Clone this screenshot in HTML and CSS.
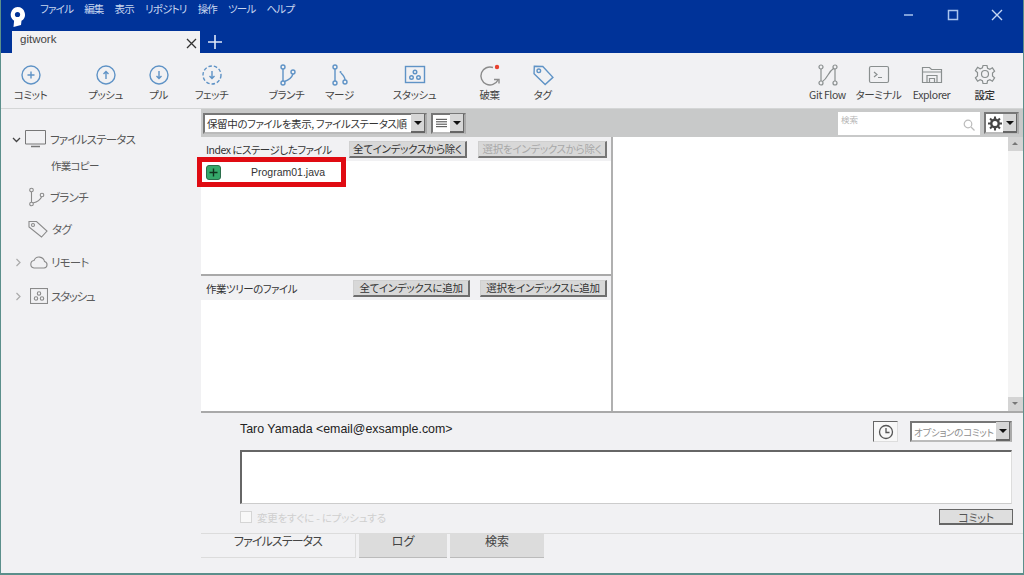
FILE: index.html
```html
<!DOCTYPE html>
<html lang="ja">
<head>
<meta charset="utf-8">
<title>gitwork</title>
<link rel="stylesheet" href="styles.css">
</head>
<body>
<div class="app">
  <header class="titlebar">
    <div class="menurow">
      <svg class="logo" width="17" height="22" viewBox="0 0 16 22"><path d="M8 1a7.5 7.5 0 0 1 4 13.8L11.500 19 4 21l.6-6.300A7.500 7.500 0 0 1 8 1z" fill="#fff"/><circle cx="8" cy="8.500" r="2.600" fill="#003399"/></svg>
      <nav class="menu"><span>ファイル</span><span>編集</span><span>表示</span><span>リポジトリ</span><span>操作</span><span>ツール</span><span>ヘルプ</span></nav>
      <div class="winctl">
        <svg width="12" height="12" viewBox="0 0 12 12"><path d="M1 6h9" stroke="#a9c4ee" stroke-width="1.500"/></svg>
        <svg width="12" height="12" viewBox="0 0 12 12"><rect x="1.500" y="1.500" width="9" height="9" fill="none" stroke="#a9c4ee" stroke-width="1.500"/></svg>
        <svg width="12" height="12" viewBox="0 0 12 12"><path d="M1 1l10 10M11 1L1 11" stroke="#c6d8f4" stroke-width="1.400"/></svg>
      </div>
    </div>
    <div class="tabrow">
      <div class="doctab"><span>gitwork</span><svg width="11" height="11" viewBox="0 0 11 11"><path d="M1 1l9 9M10 1l-9 9" stroke="#333" stroke-width="1.300"/></svg></div>
      <svg class="plus" width="14" height="14" viewBox="0 0 14 14"><path d="M7 0v14M0 7h14" stroke="#dfe8f8" stroke-width="1.600"/></svg>
    </div>
  </header>

  <section class="toolbar">
    <div class="tool"><svg width="24" height="24" viewBox="0 0 24 24"><circle cx="12" cy="12" r="9" class="ib"/><path d="M12 8.500v7M8.500 12h7" class="ib"/></svg><span>コミット</span></div>
    <div class="tool g"><svg width="24" height="24" viewBox="0 0 24 24"><circle cx="12" cy="12" r="9" class="ib"/><path d="M12 16V8.500M9.500 11L12 8.500l2.500 2.500" class="ib"/></svg><span>プッシュ</span></div>
    <div class="tool"><svg width="24" height="24" viewBox="0 0 24 24"><circle cx="12" cy="12" r="9" class="ib"/><path d="M12 8v7.500M9.500 13l2.500 2.500 2.500-2.500" class="ib"/></svg><span>プル</span></div>
    <div class="tool"><svg width="24" height="24" viewBox="0 0 24 24"><circle cx="12" cy="12" r="9" class="ib" stroke-dasharray="3.500 2"/><path d="M12 8v7.500M9.500 13l2.500 2.500 2.500-2.500" class="ib"/></svg><span>フェッチ</span></div>
    <div class="tool g"><svg width="24" height="24" viewBox="0 0 24 24"><circle cx="8" cy="4" r="2" class="ib"/><circle cx="8" cy="20" r="2" class="ib"/><circle cx="18" cy="9" r="2" class="ib"/><path d="M8 6v12M9.500 18.500C14 17 17 14 18 11" class="ib"/></svg><span>ブランチ</span></div>
    <div class="tool"><svg width="24" height="24" viewBox="0 0 24 24"><circle cx="7" cy="4" r="2" class="ib"/><circle cx="7" cy="20" r="2" class="ib"/><circle cx="17" cy="19" r="2" class="ib"/><path d="M7 6v12M17 17c0-3-2-5-4-7" class="ib"/><circle cx="12.500" cy="9" r="1" fill="#5f93c6"/></svg><span>マージ</span></div>
    <div class="tool g"><svg width="24" height="24" viewBox="0 0 24 24"><rect x="2.500" y="3.500" width="19" height="16" class="ib"/><circle cx="12" cy="9" r="1.800" class="ib"/><circle cx="8.500" cy="14.500" r="1.800" class="ib"/><circle cx="15.500" cy="14.500" r="1.800" class="ib"/></svg><span>スタッシュ</span></div>
    <div class="tool g"><svg width="24" height="24" viewBox="0 0 24 24"><path d="M15 4.500A9 9 0 1 0 20 17" fill="none" stroke="#8b8b8b" stroke-width="1.400"/><path d="M16 16.500h5v4" fill="none" stroke="#8b8b8b" stroke-width="1.400"/><circle cx="19" cy="4" r="2.200" fill="#e8412f"/></svg><span>破棄</span></div>
    <div class="tool"><svg width="24" height="24" viewBox="0 0 24 24"><path d="M3 3.500h8.500L22 14l-7.500 7.500L3 11z" class="ib" transform="rotate(2 12 12)"/><circle cx="7.800" cy="7.800" r="1.800" class="ib"/></svg><span>タグ</span></div>
    <div class="spacer"></div>
    <div class="tool flow"><svg width="24" height="24" viewBox="0 0 24 24"><circle cx="5" cy="4" r="2" class="ig"/><circle cx="5" cy="20" r="2" class="ig"/><circle cx="19" cy="4" r="2" class="ig"/><circle cx="19" cy="20" r="2" class="ig"/><path d="M5 6v12M19 6v12M6.500 18.500C12 15 12 9 17.500 5.500" class="ig"/></svg><span>Git Flow</span></div>
    <div class="tool"><svg width="24" height="24" viewBox="0 0 24 24"><rect x="2.500" y="3.500" width="19" height="16" rx="1.500" class="ig"/><path d="M7 9l3 2.500L7 14M11 14.500h4" class="ig"/></svg><span>ターミナル</span></div>
    <div class="tool"><svg width="24" height="24" viewBox="0 0 24 24"><path d="M2.500 19.500v-15h7l2 2h10v13z" class="ig"/><path d="M2.500 9h19M7 19.500v-7h10v7M9.500 19.500v-4h5v4" class="ig"/></svg><span>Explorer</span></div>
    <div class="tool"><svg width="24" height="24" viewBox="0 0 24 24"><path d="M10 2.500h4l.6 2.800 2.300 1 2.500-1.500 2.200 3.400-2.100 1.900v2.800l2.100 1.900-2.200 3.400-2.500-1.500-2.300 1-.6 2.800h-4l-.6-2.800-2.300-1-2.500 1.500-2.200-3.400 2.100-1.900V9.600L2.400 7.700l2.200-3.400 2.500 1.500 2.300-1z" class="ig"/><circle cx="12" cy="11" r="3.500" class="ig"/></svg><span class="strong">設定</span></div>
  </section>

  <div class="body">
    <aside class="sidebar">
      <div class="side first">
        <svg class="chev" width="9" height="9" viewBox="0 0 9 9"><path d="M1 3l3.500 3.500L8 3" fill="none" stroke="#444" stroke-width="1.300"/></svg>
        <svg width="21" height="18" viewBox="0 0 21 18"><path d="M.5.500h20v13.500H.5z" fill="none" stroke="#777"/><path d="M6 16.500h9" stroke="#777" stroke-width="1.500"/></svg>
        <span class="sidetxt big">ファイルステータス</span>
      </div>
      <div class="side sub"><span>作業コピー</span></div>
      <div class="side branch">
        <svg width="17" height="20" viewBox="0 0 17 20"><circle cx="3.500" cy="3" r="1.800" class="is"/><circle cx="3.500" cy="17" r="1.800" class="is"/><circle cx="14" cy="8" r="1.800" class="is"/><path d="M3.500 5v10M5 16c4-1 7.500-3.500 8.500-6" class="is"/></svg>
        <span class="sidetxt">ブランチ</span>
      </div>
      <div class="side tag">
        <svg width="20" height="18" viewBox="0 0 20 18"><path d="M1 1.500h7.500L19 11l-5.500 6L1 7z" class="is"/><circle cx="5" cy="5" r="1.500" class="is"/></svg>
        <span class="sidetxt">タグ</span>
      </div>
      <div class="side remote">
        <svg class="chev" width="7" height="9" viewBox="0 0 7 9"><path d="M1.500 1l3.500 3.500L1.500 8" fill="none" stroke="#aaa" stroke-width="1.200"/></svg>
        <svg width="18" height="13" viewBox="0 0 18 13"><path d="M4 12h10a3.300 3.300 0 0 0 .5-6.500A5.500 5.500 0 0 0 4 4.500 3.800 3.800 0 0 0 4 12z" class="is"/></svg>
        <span class="sidetxt">リモート</span>
      </div>
      <div class="side stash">
        <svg class="chev" width="7" height="9" viewBox="0 0 7 9"><path d="M1.500 1l3.500 3.500L1.500 8" fill="none" stroke="#aaa" stroke-width="1.200"/></svg>
        <svg width="18" height="16" viewBox="0 0 18 16"><rect x=".5" y=".5" width="17" height="15" class="is"/><circle cx="9" cy="5.500" r="1.700" class="is"/><circle cx="6" cy="10.500" r="1.700" class="is"/><circle cx="12" cy="10.500" r="1.700" class="is"/></svg>
        <span class="sidetxt">スタッシュ</span>
      </div>
    </aside>

    <main class="main">
      <div class="filterbar">
        <div class="combo filter"><span class="combotxt">保留中のファイルを表示, ファイルステータス順</span><i class="drop"></i></div>
        <div class="combo view">
          <svg width="12" height="10" viewBox="0 0 12 10"><path d="M0 1h12M0 3.700h12M0 6.300h12M0 9h12" stroke="#333"/></svg>
          <i class="drop"></i>
        </div>
        <div class="search"><span>検索</span>
          <svg width="12" height="12" viewBox="0 0 12 12"><circle cx="5" cy="5" r="3.800" fill="none" stroke="#bbb" stroke-width="1.200"/><path d="M8 8l3.500 3.500" stroke="#bbb" stroke-width="1.300"/></svg>
        </div>
        <div class="combo gear">
          <svg width="15" height="15" viewBox="0 0 15 15"><circle cx="7.500" cy="7.500" r="4" fill="none" stroke="#444" stroke-width="2.600"/><path d="M7.500 0v3M7.500 12v3M0 7.500h3M12 7.500h3M2.200 2.200l2 2M10.800 10.800l2 2M12.800 2.200l-2 2M4.200 10.800l-2 2" stroke="#444" stroke-width="2.200"/></svg>
          <i class="drop"></i>
        </div>
      </div>

      <div class="panes">
        <div class="leftpanes">
          <section class="pane staged">
            <div class="panehead">
              <span class="panelabel">Index にステージしたファイル</span>
              <button class="btn rm-all">全てインデックスから除く</button>
              <button class="btn rm-sel off">選択をインデックスから除く</button>
            </div>
            <div class="filerow">
              <svg width="15" height="15" viewBox="0 0 15 15"><rect x=".5" y=".5" width="14" height="14" rx="2.500" fill="#35a86a" stroke="#2b6e4b"/><path d="M7.500 3.500v8M3.500 7.500h8" stroke="#10331f" stroke-width="1.400"/></svg>
              <span>Program01.java</span>
            </div>
          </section>
          <section class="pane working">
            <div class="panehead second">
              <span class="panelabel">作業ツリーのファイル</span>
              <button class="btn add-all">全てインデックスに追加</button>
              <button class="btn add-sel">選択をインデックスに追加</button>
            </div>
          </section>
        </div>
        <div class="diff">
          <div class="scroll">
            <i class="arrow up"></i>
            <i class="arrow down"></i>
          </div>
        </div>
      </div>

      <section class="commit">
        <div class="authorrow">
          <span class="author">Taro Yamada &lt;email@exsample.com&gt;</span>
          <div class="clock"><svg width="16" height="16" viewBox="0 0 16 16"><circle cx="8" cy="8" r="6.500" fill="none" stroke="#555" stroke-width="1.300"/><path d="M8 4v4.500h3.500" fill="none" stroke="#555" stroke-width="1.300"/></svg></div>
          <div class="combo options"><span class="combotxt">オプションのコミット</span><i class="drop"></i></div>
        </div>
        <div class="message"></div>
        <div class="commitfoot">
          <label class="push"><i class="check"></i><span>変更をすぐに - にプッシュする</span></label>
          <button class="btn commitbtn">コミット</button>
        </div>
      </section>

      <div class="bottomtabs">
        <div class="btab active">ファイルステータス</div>
        <div class="btab log">ログ</div>
        <div class="btab find">検索</div>
      </div>
    </main>
  </div>
</div>
<div class="callout"></div>
</body>
</html>
```
FILE: styles.css
```css
* { box-sizing: border-box; }
html, body { margin: 0; padding: 0; }
body {
  width: 1024px;
  height: 575px;
  overflow: hidden;
  position: relative;
  font-family: "Noto Sans CJK JP", "Noto Sans", sans-serif;
  font-feature-settings: "palt";
  color: #333;
  background: #f1f1f3;
}
.app {
  width: 1024px;
  height: 575px;
  display: flex;
  flex-direction: column;
  border-left: 1px solid #5b8f8b;
  border-right: 1px solid #5b8f8b;
  border-bottom: 2px solid #5b8f8b;
}
.titlebar {
  height: 53px;
  flex: none;
  background: #003399;
  display: flex;
  flex-direction: column;
}
.menurow { height: 31px; display: flex; align-items: flex-start; }
.logo { margin: 6px 0 0 8px; flex: none; }
.menu {
  display: flex;
  gap: 11px;
  margin: 1px 0 0 14px;
  font-size: 10.500px;
  line-height: 16px;
  letter-spacing: -.8px;
  color: #c9d7ef;
}
.winctl {
  margin-left: auto;
  display: flex;
  gap: 32px;
  padding: 9px 20px 0 0;
}
.tabrow { height: 22px; display: flex; align-items: flex-start; }
.doctab {
  width: 188px;
  height: 22px;
  margin-left: 11px;
  background: #f1f1f3;
  display: flex;
  justify-content: space-between;
  align-items: flex-start;
  padding: 1px 3px 0 8px;
  font-family: "Liberation Sans", sans-serif;
  font-size: 11.500px;
  line-height: 14px;
  color: #444;
}
.doctab svg { margin-top: 6px; }
.plus { margin: 4px 0 0 8px; }

.toolbar {
  height: 56px;
  flex: none;
  display: flex;
  padding: 10px 12px 0 3px;
  background: #f1f1f3;
  border-bottom: 1px solid #d4d6d6;
}
.tool {
  width: 53px;
  display: flex;
  flex-direction: column;
  align-items: center;
  font-size: 10.500px;
  line-height: 14px;
  letter-spacing: -.4px;
  color: #444;
  white-space: nowrap;
  gap: 1px;
}
.tool svg { flex: none; }
.tool.g { margin-left: 22px; }
.tool.flow { margin-right: -2px; }
.spacer { flex: 1; }
.strong { color: #333; font-weight: 500; }
.ib { fill: none; stroke: #5f93c6; stroke-width: 1.400; }
.ig { fill: none; stroke: #8a8f8f; stroke-width: 1.200; }
.is { fill: none; stroke: #8a8a8a; stroke-width: 1.100; }

.body { flex: 1; display: flex; min-height: 0; }
.sidebar { width: 200px; flex: none; padding-top: 19px; background: #f1f1f3; }
.side { display: flex; align-items: center; font-size: 11.500px; letter-spacing: -.7px; color: #5c5c5c; }
.side.first { height: 22px; padding-left: 11px; gap: 4px; }
.sidetxt.big { font-size: 11.500px; letter-spacing: -.8px; color: #555; }
.side.sub { height: 30px; padding-left: 50px; font-size: 10.500px; letter-spacing: -.7px; color: #555; }
.side.branch { height: 32px; padding-left: 27px; gap: 5px; margin-top: 1px; }
.side.tag { height: 32px; padding-left: 27px; gap: 4px; }
.side.remote { height: 34px; padding-left: 14px; gap: 3px; }
.side.stash { height: 34px; padding-left: 14px; gap: 3px; }
.remote .chev, .stash .chev { margin-right: 5px; }
.stash .sidetxt { letter-spacing: -1.300px; }

.main { flex: 1; min-width: 0; display: flex; flex-direction: column; }
.filterbar {
  height: 28px;
  flex: none;
  background: #c8c9c9;
  display: flex;
  align-items: center;
  padding: 0 4px 0 2px;
  gap: 4px;
}
.combo {
  height: 21px;
  display: flex;
  align-items: center;
  background: #fff;
  border: 2px solid #777;
  border-right-color: #aaa;
  border-bottom-color: #bbb;
  font-size: 10.500px;
  color: #333;
}
.combotxt { flex: 1; padding-left: 2px; white-space: nowrap; min-width: 0; }
.drop {
  width: 14px;
  height: 19px;
  flex: none;
  background: #d6d6d6;
  border-right: 1px solid #666;
  border-bottom: 2px solid #666;
  position: relative;
}
.drop::after {
  content: "";
  position: absolute;
  left: 3px;
  top: 7px;
  border: 4px solid transparent;
  border-top: 4px solid #111;
  border-bottom: 0;
}
.filter { width: 224px; letter-spacing: -.4px; }
.view { width: 35px; gap: 3px; padding-left: 3px; }
.search {
  width: 142px;
  height: 23px;
  margin-left: auto;
  background: #fff;
  display: flex;
  justify-content: space-between;
  padding: 1px 5px 0 3px;
  font-size: 8.500px;
  color: #b5b5b5;
  align-items: flex-start;
}
.search svg { margin-top: 6px; }
.gear { width: 35px; height: 22px; padding-left: 2px; gap: 1px; }

.panes { height: 276px; flex: none; display: flex; background: #fff; border-bottom: 2px solid #a9a9a9; }
.leftpanes { width: 412px; flex: none; display: flex; flex-direction: column; border-right: 2px solid #b0b0b0; }
.pane.staged { height: 139px; flex: none; border-bottom: 2px solid #a9a9a9; }
.pane.working { flex: 1; }
.panehead {
  height: 24px;
  display: flex;
  align-items: center;
  background: #f1f1f3;
  padding: 0 4px 0 5px;
  font-size: 10.500px;
  letter-spacing: -.5px;
}
.panelabel { margin-right: auto; color: #333; white-space: nowrap; }
.btn {
  height: 17px;
  padding: 0;
  font: inherit;
  font-family: "Noto Sans CJK JP", sans-serif;
  font-feature-settings: "palt";
  letter-spacing: -.3px;
  line-height: 14px;
  background: #d8d8d8;
  color: #333;
  border: 1px solid #d0d0d0;
  border-right: 2px solid #6e6e6e;
  border-bottom: 2px solid #6e6e6e;
  white-space: nowrap;
}
.btn.off { color: #a8a8a8; border-color: #cfcfcf #777 #777 #cfcfcf; }
.rm-all { width: 118px; margin-right: 11px; }
.rm-sel { width: 129px; }
.add-all { width: 117px; margin-right: 10px; }
.add-sel { width: 127px; }
.filerow {
  height: 22px;
  display: flex;
  align-items: center;
  padding-left: 5px;
  font-family: "Liberation Sans", sans-serif;
  font-size: 10.500px;
  color: #333;
  gap: 30px;
}
.diff { flex: 1; position: relative; display: flex; justify-content: flex-end; }
.scroll { width: 15px; background: #f4f4f4; display: flex; flex-direction: column; justify-content: space-between; }
.arrow { height: 14px; background: #d4d4d4; display: block; position: relative; }
.arrow::after {
  content: "";
  position: absolute;
  left: 4px;
  top: 5px;
  border: 3px solid transparent;
}
.arrow.up::after { border-bottom-color: #777; border-top: 0; }
.arrow.down::after { border-top-color: #777; border-bottom: 0; }

.commit { height: 121px; flex: none; padding: 8px 11px 0 39px; display: flex; flex-direction: column; background: #f1f1f3; border-bottom: 1px solid #dcdcdc; }
.authorrow { height: 29px; display: flex; align-items: flex-start; }
.author {
  font-family: "Liberation Sans", sans-serif;
  font-size: 12.400px;
  line-height: 16px;
  color: #222;
  margin-right: auto;
}
.clock {
  width: 25px;
  height: 21px;
  display: flex;
  align-items: center;
  justify-content: center;
  border: 1px solid #666;
  border-right-color: #ddd;
  border-bottom-color: #ddd;
  background: #f8f8f8;
  margin-right: 12px;
}
.options { width: 102px; color: #8e8e8e; font-size: 9.500px; letter-spacing: -.3px; }
.message {
  height: 54px;
  flex: none;
  background: #fff;
  border: 2px solid #666;
  border-right: 1px solid #ddd;
  border-bottom: 1px solid #ccc;
}
.commitfoot { display: flex; justify-content: space-between; align-items: center; margin-top: 5px; }
.push { display: flex; align-items: center; gap: 5px; font-size: 10.500px; letter-spacing: -.2px; color: #cfcfcf; }
.check { width: 12px; height: 12px; background: #f8f8f8; border: 1px solid #d5d5d5; }
.commitbtn { width: 74px; height: 16px; font-size: 11px; color: #555; background: #dedede; border: 1px solid #666; border-right-width: 1px; border-bottom-width: 2px; line-height: 12px; margin-right: -1px; }

.bottomtabs { display: flex; height: 24px; flex: none; background: #f1f1f3; }
.btab {
  height: 24px;
  font-size: 12px;
  line-height: 14px;
  text-align: center;
  color: #444;
  background: #dcdcdc;
  border-bottom: 1px solid #bbb;
}
.btab.active { width: 155px; background: #f1f1f3; border-bottom: 1px solid #dcdcdc; border-right: 1px solid #ddd; margin-right: 3px; letter-spacing: -.9px; }
.btab.log { width: 88px; margin-right: 3px; }
.btab.find { width: 94px; }

.callout {
  position: absolute;
  left: 197px;
  top: 157px;
  width: 149px;
  height: 30px;
  border: 5px solid #e00b12;
}
```
